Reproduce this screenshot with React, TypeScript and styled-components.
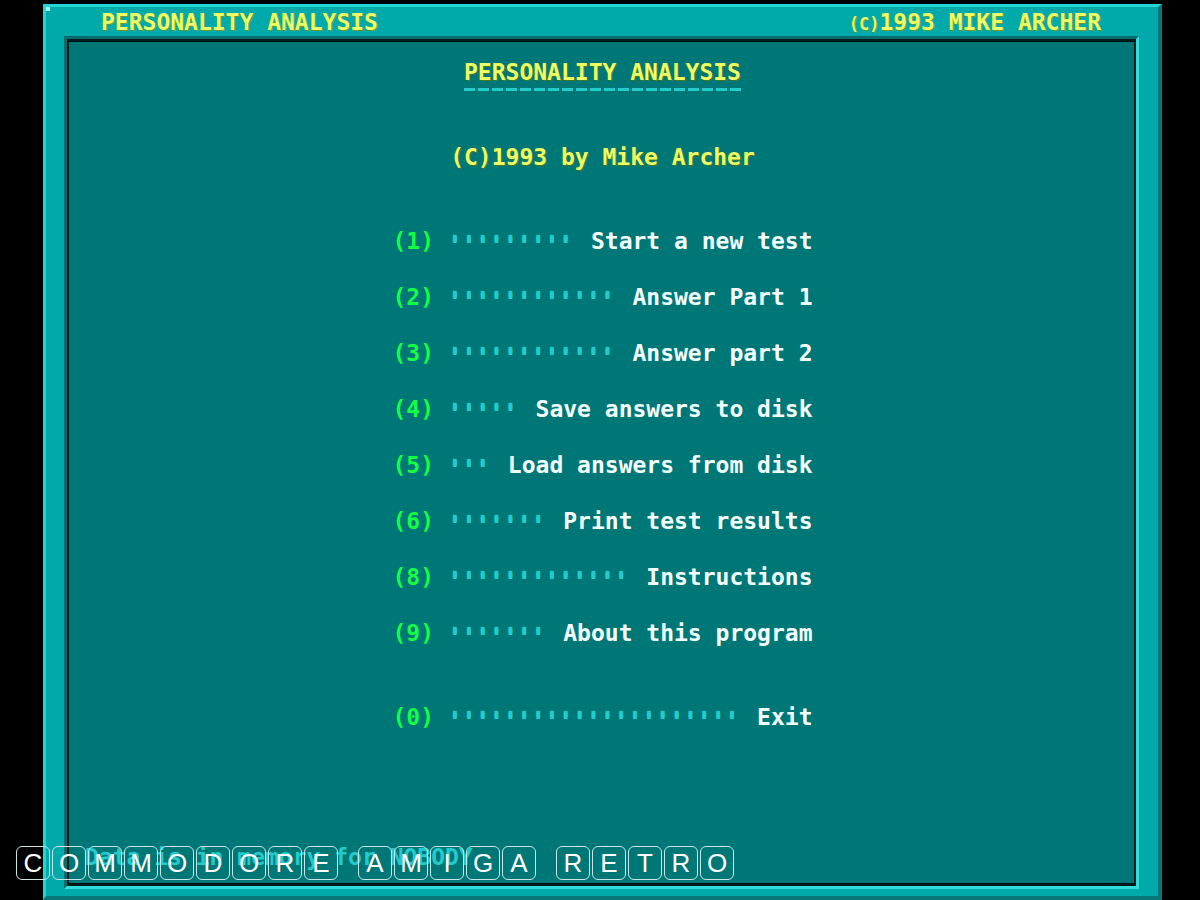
import React from "react";
import styled, { createGlobalStyle } from "styled-components";

const GlobalStyle = createGlobalStyle`
  * { box-sizing: border-box; }
  body {
    margin: 0;
    background: #000;
    font-family: "DejaVu Sans Mono", "Liberation Mono", monospace;
    font-size: 23px;
    line-height: 28px;
    font-weight: 700;
  }
`;

const Page = styled.div`
  position: relative;
  display: flex;
  min-height: 100vh;
  padding: 4px 38px 0 43px;
  overflow: hidden;
`;

const Frame = styled.div`
  position: relative;
  flex: 1;
  min-width: 0;
  display: flex;
  flex-direction: column;
  background: #00aaaa;
  border-style: solid;
  border-width: 3px 4px 4px 3px;
  border-color: #22d6d6 #087676 #087676 #22d6d6;

  &::before {
    content: "";
    position: absolute;
    top: 0;
    left: 0;
    width: 4px;
    height: 4px;
    background: #aaffff;
  }
`;

const TitleBar = styled.header`
  display: flex;
  justify-content: space-between;
  height: 29px;
  padding: 1px 57px 0 55px;
  color: #eeff66;
  text-shadow: 1px 1px 0 #669933;
`;

const Mark = styled.span`
  font-size: 17px;
`;

const Screen = styled.main`
  flex: 1;
  display: flex;
  flex-direction: column;
  align-items: center;
  margin: 0 19px 7px 18px;
  padding: 19px 16px 15px 18px;
  background: #007777;
  border-style: solid;
  border-width: 3px;
  border-color: #086c6c #33dddd #33dddd #086c6c;
  box-shadow: inset 0 0 0 2px #001c1c, inset 0 3px 0 #001010, inset 0 -3px 0 #001010;
`;

const Title = styled.h1`
  margin: 0 0 52px;
  font-size: 23px;
  line-height: 28px;
  color: #eeff66;
  text-shadow: 1px 1px 0 #447722;

  &::after {
    content: "";
    display: block;
    height: 3px;
    margin-top: 2px;
    background: repeating-linear-gradient(90deg, #22cccc 0 11px, transparent 11px 14px);
  }
`;

const Credit = styled.p`
  margin: 0 0 56px;
  color: #eeff66;
  text-shadow: 1px 1px 0 #447722;
`;

const Menu = styled.nav`
  display: flex;
  flex-direction: column;
  gap: 28px;
  width: 420px;
  max-width: 100%;
`;

const MenuItem = styled.button<{ $apart?: boolean }>`
  display: flex;
  justify-content: space-between;
  width: 100%;
  margin: ${(p) => (p.$apart ? "28px 0 0" : "0")};
  padding: 0;
  border: 0;
  background: none;
  font: inherit;
  color: #f4ffff;
  white-space: pre;
  cursor: pointer;
`;

const Key = styled.span`
  color: #11ff44;
`;

const Dots = styled.span`
  flex: 1;
  padding-left: 14px;
  color: #22cccc;
  text-align: left;
  text-shadow: 0 -2px 0 #22cccc, 0 -4px 0 #22cccc;
`;

const Status = styled.p`
  align-self: flex-start;
  margin: auto 0 0;
  color: #22cccc;
`;

const Banner = styled.div`
  position: absolute;
  left: 16px;
  bottom: 20px;
  display: flex;
  gap: 20px;
  font-family: "Liberation Sans Narrow", "Arial Narrow", "Liberation Sans", sans-serif;
  font-size: 26px;
  font-weight: 400;
  color: #fff;
`;

const Word = styled.div`
  display: flex;
  gap: 2px;
`;

const Tile = styled.span`
  width: 34px;
  height: 34px;
  border: 1px solid #c8e6e6;
  border-radius: 6px;
  line-height: 32px;
  text-align: center;
`;

const items = [
  { key: "1", label: "Start a new test", dots: 9 },
  { key: "2", label: "Answer Part 1", dots: 12 },
  { key: "3", label: "Answer part 2", dots: 12 },
  { key: "4", label: "Save answers to disk", dots: 5 },
  { key: "5", label: "Load answers from disk", dots: 3 },
  { key: "6", label: "Print test results", dots: 7 },
  { key: "8", label: "Instructions", dots: 13 },
  { key: "9", label: "About this program", dots: 7 },
  { key: "0", label: "Exit", dots: 21, apart: true },
];

export default function App() {
  return (
    <Page>
      <GlobalStyle />
      <Frame>
        <TitleBar>
          <span>PERSONALITY ANALYSIS</span>
          <span>
            <Mark>(C)</Mark>1993 MIKE ARCHER
          </span>
        </TitleBar>
        <Screen>
          <Title>PERSONALITY ANALYSIS</Title>
          <Credit>(C)1993 by Mike Archer</Credit>
          <Menu aria-label="Main menu">
            {items.map((item) => (
              <MenuItem key={item.key} type="button" $apart={item.apart}>
                <Key>({item.key})</Key>
                <Dots aria-hidden="true">{"·".repeat(item.dots)}</Dots>
                <span>{item.label}</span>
              </MenuItem>
            ))}
          </Menu>
          <Status>Data is in memory for NOBODY</Status>
        </Screen>
      </Frame>
      <Banner>
        {["COMMODORE", "AMIGA", "RETRO"].map((word) => (
          <Word key={word}>
            {word.split("").map((letter, i) => (
              <Tile key={i}>{letter}</Tile>
            ))}
          </Word>
        ))}
      </Banner>
    </Page>
  );
}
